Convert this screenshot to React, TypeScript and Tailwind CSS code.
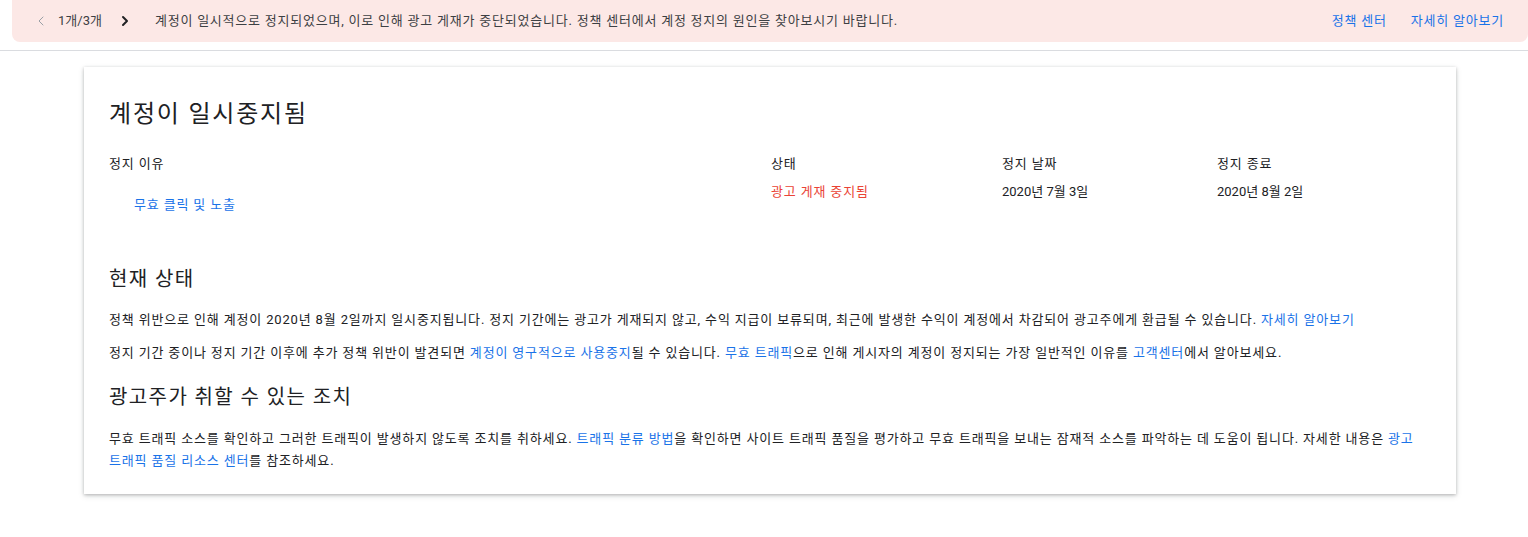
import { ChevronLeft, ChevronRight } from "lucide-react";

const font = "font-['Roboto','Noto_Sans_CJK_KR',sans-serif]";

function A({ children }: { children: React.ReactNode }) {
  return <a className="text-[#1a73e8]">{children}</a>;
}

export default function App() {
  return (
    <div className={`${font} min-h-[537px] bg-white text-[13px] tracking-[0.065em] text-[#202124] break-keep`}>
      {/* Alert banner */}
      <div className="ml-3 flex h-[42px] items-center rounded-b-lg bg-[#fce8e6] pr-6 tracking-[0.06em]">
        <ChevronLeft className="ml-[21px] h-4 w-4 text-[#9aa0a6]" strokeWidth={1.5} />
        <span className="ml-[9px] tracking-normal text-[#3c4043]">1개/3개</span>
        <ChevronRight className="ml-[15px] h-4 w-4 text-[#202124]" strokeWidth={3} />
        <span className="ml-[22px] text-[#3c4043]">
          계정이 일시적으로 정지되었으며, 이로 인해 광고 게재가 중단되었습니다. 정책 센터에서 계정 정지의 원인을 찾아보시기 바랍니다.
        </span>
        <div className="ml-auto flex gap-6 text-[#1a73e8]">
          <span>정책 센터</span>
          <span>자세히 알아보기</span>
        </div>
      </div>
      <div className="mt-2 h-px bg-[#dadce0]" />

      {/* Card */}
      <div className="ml-[84px] mr-[72px] mt-4 bg-white px-[25px] pb-[22px] pt-[29px] shadow-[0_1px_3px_rgba(60,64,67,0.3),0_2px_6px_rgba(60,64,67,0.15)]">
        <h1 className="text-[24px] leading-[36px] tracking-[0.075em] text-[#202124]">계정이 일시중지됨</h1>

        <div className="mt-[22px] grid grid-cols-[662px_231px_215px_1fr]">
          <div>
            <div className="leading-[20px]">정지 이유</div>
            <div className="mt-[21px] pl-[25px] leading-[20px]">
              <A>무효 클릭 및 노출</A>
            </div>
          </div>
          <div>
            <div className="leading-[20px]">상태</div>
            <div className="mt-2 leading-[20px] text-[#ea4335]">광고 게재 중지됨</div>
          </div>
          <div>
            <div className="leading-[20px]">정지 날짜</div>
            <div className="mt-2 leading-[20px] tracking-normal">2020년 7월 3일</div>
          </div>
          <div>
            <div className="leading-[20px]">정지 종료</div>
            <div className="mt-2 leading-[20px] tracking-normal">2020년 8월 2일</div>
          </div>
        </div>

        <h2 className="mt-[49px] text-[20px] leading-[30px] tracking-[0.07em]">현재 상태</h2>
        <p className="mt-[16px] leading-[20px]">
          정책 위반으로 인해 계정이 2020년 8월 2일까지 일시중지됩니다. 정지 기간에는 광고가 게재되지 않고, 수익 지급이 보류되며, 최근에 발생한 수익이 계정에서 차감되어 광고주에게 환급될 수 있습니다. <A>자세히 알아보기</A>
        </p>
        <p className="mt-[13px] leading-[20px]">
          정지 기간 중이나 정지 기간 이후에 추가 정책 위반이 발견되면 <A>계정이 영구적으로 사용중지</A>될 수 있습니다. <A>무효 트래픽</A>으로 인해 게시자의 계정이 정지되는 가장 일반적인 이유를 <A>고객센터</A>에서 알아보세요.
        </p>

        <h2 className="mt-[19px] text-[20px] leading-[30px] tracking-[0.07em]">광고주가 취할 수 있는 조치</h2>
        <p className="mt-[16px] leading-[22px]">
          무효 트래픽 소스를 확인하고 그러한 트래픽이 발생하지 않도록 조치를 취하세요. <A>트래픽 분류 방법</A>을 확인하면 사이트 트래픽 품질을 평가하고 무효 트래픽을 보내는 잠재적 소스를 파악하는 데 도움이 됩니다. 자세한 내용은 <A>광고 트래픽 품질 리소스 센터</A>를 참조하세요.
        </p>
      </div>
    </div>
  );
}
